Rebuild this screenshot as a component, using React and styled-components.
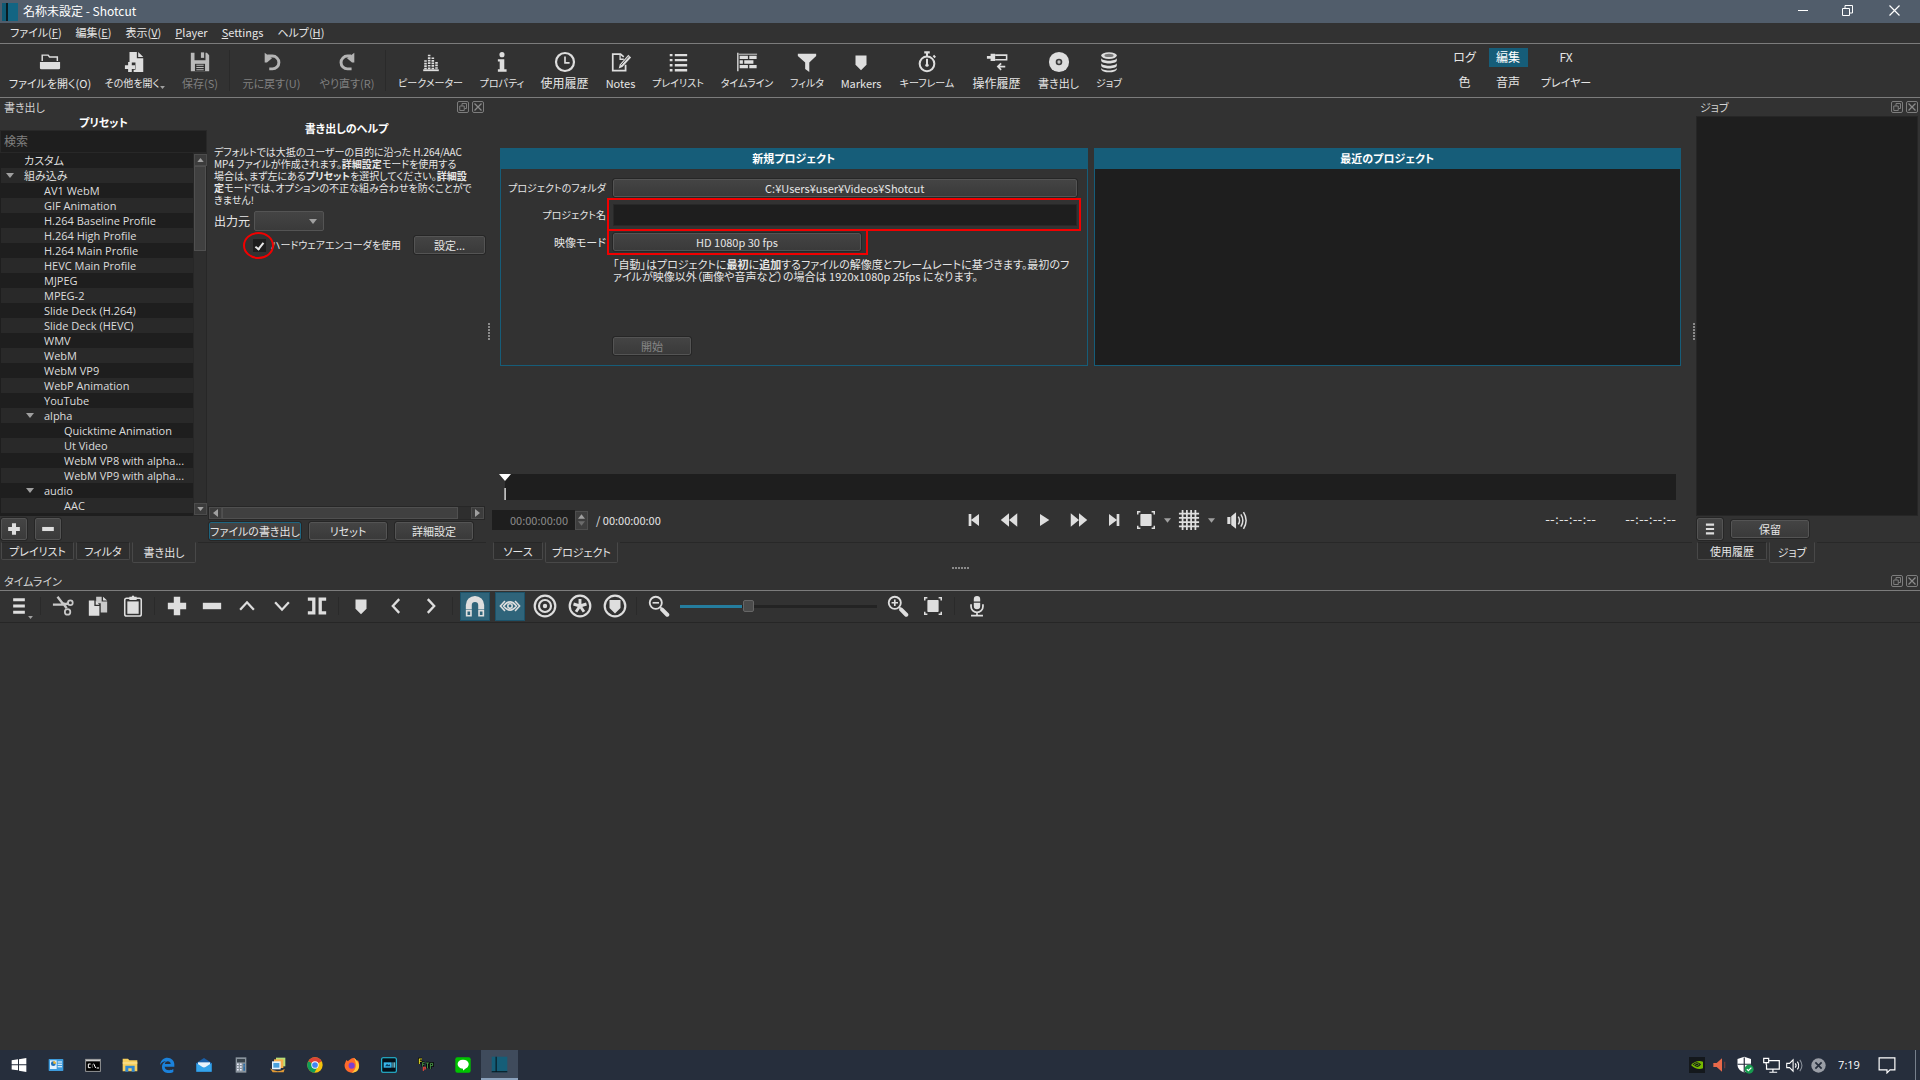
import React from "react";
import styled, { createGlobalStyle, css } from "styled-components";

const c = {
  bg: "#323232",
  dark: "#1e1e1e",
  alt: "#292929",
  line: "#7c7c7c",
  text: "#e6e6e6",
  dim: "#808080",
  accent: "#165d79",
  icon: "#dedede",
  red: "#f20000",
};

const Global = createGlobalStyle`
  *, *::before, *::after { box-sizing: border-box; }
  html, body { margin: 0; background: ${c.bg}; }
  body, button, input, select {
    font-family: "Noto Sans CJK JP", "Noto Sans", sans-serif;
    font-size: 12px;
    line-height: 12px;
    font-feature-settings: "palt";
    color: ${c.text};
  }
  button, input, select { margin: 0; padding: 0; border: 0; background: none; border-radius: 0; outline: none; }
  svg { display: block; flex: none; }
`;

const Screen = styled.div`
  min-height: 100vh;
  display: flex;
  flex-direction: column;
  overflow: hidden;
`;

/* ---------- icons ---------- */
const Svg = ({ s = 24, w, h, children, ...rest }) => (
  <svg width={w || s} height={h || s} viewBox="0 0 24 24" fill="none" stroke="none" aria-hidden="true" {...rest}>
    {children}
  </svg>
);
const I = c.icon;
const shapes = {
  open: (
    <>
      <path d="M3.500 11V4.500h6.500l1.500 2H20V11" stroke={I} strokeWidth="1.600" />
      <path d="M1 12h22v6.500q0 1.500-1.500 1.500h-19Q1 20 1 18.500z" fill={I} />
    </>
  ),
  openOther: (
    <>
      <path d="M6 1h8v7h7v15H10.500v-2.500h2V12.500H6z" fill={I} />
      <path d="M15.500 1v5.500H21z" fill={I} />
      <path d="M4.500 12h4v3.500H12v4H8.500V23h-4v-3.500H1v-4h3.500z" fill={I} />
    </>
  ),
  save: (
    <>
      <path d="M2 2h4v8h12V2h1.500L22 4.500V22H2z" fill="#b9b9b9" />
      <path d="M13 1.500h3.500v6H13z" fill="#b9b9b9" />
      <path d="M6.500 14h11v8h-11z" fill="#323232" />
      <path d="M8 15.500h8M8 18h8M8 20.500h8" stroke="#b9b9b9" strokeWidth="1.200" />
    </>
  ),
  undo: (
    <>
      <path d="M7 5.500h5.500a7 7 0 0 1 0 14H9" stroke="#b4b4b4" strokeWidth="3.200" />
      <path d="M4 2v10.500h2.500L12 8z" fill="#b4b4b4" />
    </>
  ),
  redo: (
    <>
      <path d="M16.500 5.500h-4a7 7 0 0 0 0 14h4.500" stroke="#b4b4b4" strokeWidth="3.200" />
      <path d="M20 2v10.500h-2.500L12 8z" fill="#b4b4b4" />
    </>
  ),
  peak: (
    <>
      <path d="M6 10v10M10 4v16M14 7v13M18 12v8" stroke={I} strokeWidth="2.800" strokeDasharray="1.800 1" />
      <path d="M3.500 20h17v2h-17z" fill={I} />
    </>
  ),
  info: (
    <>
      <circle cx="12" cy="4" r="2.800" fill={I} />
      <path d="M7.500 9h7v11H17v2.500H7.500V20h2v-8.500h-2z" fill={I} />
    </>
  ),
  clock: (
    <>
      <circle cx="12" cy="12" r="9.800" stroke={I} strokeWidth="2.400" />
      <path d="M12 6v7h5" stroke={I} strokeWidth="1.800" />
    </>
  ),
  notes: (
    <>
      <path d="M17 15v6.500H3v-18h8.500l3.500 3" stroke={I} strokeWidth="1.900" />
      <path d="M11 4v5h4" stroke={I} strokeWidth="1.400" />
      <path d="M20 4l3 3-9.500 10.500-4 1.500 1.200-4.300z" fill={I} />
      <path d="M12 15.500L20.500 6" stroke="#323232" strokeWidth=".9" />
    </>
  ),
  list: (
    <path d="M3 4.500h3M3 10h3M3 15.500h3M3 21h3M8.500 4.500H22M8.500 10H22M8.500 15.500H22M8.500 21H22" stroke={I} strokeWidth="2.600" />
  ),
  timeline: (
    <>
      <path d="M2 2v20" stroke={I} strokeWidth="1.500" />
      <path d="M4 7h9M14.500 7h8M4 12h3.500M9 12h10M4 17h9M14.500 17h8" stroke={I} strokeWidth="3.600" />
      <path d="M3 3.500h20" stroke={I} strokeWidth="1" />
    </>
  ),
  filter: <path d="M2 3h20v2.500l-7.500 7V23L10 19.500v-7L2 5.500z" fill={I} />,
  marker: <path d="M6 5h12v10l-6 6-6-6z" fill={I} />,
  keyframe: (
    <>
      <circle cx="12" cy="14" r="8" stroke={I} strokeWidth="2.200" />
      <path d="M9 1.500h6M12 1.500v4M19 5l2 2" stroke={I} strokeWidth="2.200" />
      <path d="M12 8.500v6" stroke={I} strokeWidth="2.200" />
      <circle cx="12" cy="15.500" r="1.800" fill={I} />
    </>
  ),
  history: (
    <>
      <path d="M1 5.500h4V3h5v8H5V8.500H1z" fill={I} />
      <path d="M10 4.500h12.500v5H10" stroke={I} strokeWidth="1.700" />
      <path d="M21 17h-8M16.500 13.500L13 17l3.500 3.500" stroke={I} strokeWidth="1.900" />
    </>
  ),
  disc: (
    <>
      <circle cx="12" cy="12" r="11" fill={I} />
      <circle cx="12" cy="12" r="3.600" fill="#3c3c3c" />
      <circle cx="12" cy="12" r="1.800" fill="#c4c4c4" />
    </>
  ),
  jobs: (
    <>
      <ellipse cx="12" cy="5" rx="8.500" ry="3.600" fill={I} />
      <ellipse cx="12" cy="4.800" rx="5" ry="1.800" fill="#777" />
      <path d="M3.500 7.500c1 4 16 4 17 0v3c-1 4-16 4-17 0zM3.500 13c1 4 16 4 17 0v3c-1 4-16 4-17 0zM3.500 18.300c1 4 16 4 17 0v1.500c-1 4.500-16 4.500-17 0z" fill={I} />
    </>
  ),
  plus: <path d="M8.500 2h7v6.500H22v7h-6.500V22h-7v-6.500H2v-7h6.500z" fill={I} />,
  minus: <path d="M2 8.500h20v7H2z" fill={I} />,
  menu: <path d="M5 4.500h14M5 12h14M5 19.500h14" stroke={I} strokeWidth="3.800" />,
  skipPrev: <path d="M4 3h4v8.500L19.500 3v18L8 12.500V21H4z" fill={I} />,
  skipNext: <path d="M20 3h-4v8.500L4.500 3v18L16 12.500V21h4z" fill={I} />,
  rewind: <path d="M12 3v18L1 12zM23 3v18l-11-9z" fill={I} />,
  forward: <path d="M12 3v18l11-9zM1 3v18l11-9z" fill={I} />,
  play: <path d="M6 3l14 9-14 9z" fill={I} />,
  fit: (
    <>
      <rect x="4.500" y="4" width="15" height="16" rx="1" fill={I} />
      <path d="M1 4.500V1h3.500M19.500 1H23v3.500M23 19.500V23h-3.500M4.500 23H1v-3.500" stroke={I} strokeWidth="2" />
    </>
  ),
  grid: <path d="M5 1v22M9.700 1v22M14.300 1v22M19 1v22M1 5h22M1 9.700h22M1 14.300h22M1 19h22" stroke={I} strokeWidth="1.900" />,
  volume: (
    <>
      <path d="M1.500 8H5v8H1.500zM6 7l5.500-4.500v19L6 17z" fill={I} />
      <path d="M14 7.500q3 4.500 0 9M17 5q4.500 7 0 14M20 2.500q6 9.500 0 19" stroke={I} strokeWidth="1.700" />
    </>
  ),
  cut: (
    <>
      <path d="M1 10.500h12l3 4M6 2l5.500 7 3 1 4-1" stroke="#c9c9c9" strokeWidth="2.600" />
      <circle cx="20" cy="8.500" r="2.600" stroke="#c9c9c9" strokeWidth="1.900" />
      <circle cx="17" cy="18.500" r="3" stroke="#c9c9c9" strokeWidth="1.900" />
    </>
  ),
  copy: (
    <>
      <path d="M10 2h6v5h6v12h-7V9h-5z" fill="#c9c9c9" />
      <path d="M2 6h6v6h5.500v10.500H2z" fill={I} />
      <path d="M17.500 2L22 6h-4.500zM9.500 6l4 4.500h-4z" fill={I} />
    </>
  ),
  paste: (
    <>
      <rect x="3" y="3.500" width="18" height="19.500" rx="2" stroke={I} strokeWidth="1.700" />
      <path d="M5.800 7h12.400v13.500H5.800z" fill={I} />
      <path d="M8 2h2.500q1.500-3 3 0H16v3.500H8z" fill={I} />
    </>
  ),
  up: <path d="M4.500 16L12 8l7.500 8" stroke={I} strokeWidth="2.500" />,
  down: <path d="M4.500 8L12 16l7.500-8" stroke={I} strokeWidth="2.500" />,
  left: <path d="M15.500 4.500L8.500 12l7 7.500" stroke={I} strokeWidth="2.500" />,
  right: <path d="M8.500 4.500l7 7.500-7 7.500" stroke={I} strokeWidth="2.500" />,
  split: <path d="M2 4.500h6.500v15H2M22 4.500h-6.500v15H22" stroke={I} strokeWidth="3.600" />,
  magnet: (
    <>
      <path d="M2 15.500V11a10 10 0 0 1 20 0v4.500h-6.500V11a3.500 3.500 0 0 0-7 0v4.500z" fill={I} />
      <path d="M2.900 17h4.700v5.600H2.900zM16.400 17h4.700v5.600h-4.700z" stroke={I} strokeWidth="1.800" />
    </>
  ),
  eye: (
    <>
      <path d="M6.500 6.500L1.500 12l5 5.500M17.500 6.500l5 5.500-5 5.500" stroke={I} strokeWidth="1.700" />
      <path d="M5 12q7-9 14 0-7 9-14 0z" stroke={I} strokeWidth="1.800" />
      <circle cx="12" cy="12" r="2.400" stroke={I} strokeWidth="1.700" />
    </>
  ),
  ripple: (
    <>
      <circle cx="12" cy="12" r="10.300" stroke={I} strokeWidth="2.200" />
      <circle cx="12" cy="12" r="6" stroke={I} strokeWidth="2.200" />
      <circle cx="12" cy="12" r="2.200" fill={I} />
    </>
  ),
  rippleAll: (
    <>
      <circle cx="12" cy="12" r="10.300" stroke={I} strokeWidth="2.200" />
      <path d="M12 5v7M12 12l6.500-2M12 12l4 5.800M12 12l-4 5.800M12 12L5.500 10" stroke={I} strokeWidth="2.900" />
    </>
  ),
  rippleMarker: (
    <>
      <circle cx="12" cy="12" r="10.300" stroke={I} strokeWidth="2.200" />
      <path d="M6.500 6h11v8L12 19.500 6.500 14z" fill={I} />
    </>
  ),
  zoomOut: (
    <>
      <circle cx="8.500" cy="8.500" r="6.600" stroke={I} strokeWidth="2" />
      <path d="M5 8.500h7" stroke={I} strokeWidth="1.800" />
      <path d="M15.500 16l5.500 5.500" stroke={I} strokeWidth="4.400" strokeLinecap="round" />
      <path d="M13 13l3 3" stroke={I} strokeWidth="1.800" />
    </>
  ),
  zoomIn: (
    <>
      <circle cx="8.500" cy="8.500" r="6.600" stroke={I} strokeWidth="2" />
      <path d="M5 8.500h7M8.500 5v7" stroke={I} strokeWidth="1.800" />
      <path d="M15.500 16l5.500 5.500" stroke={I} strokeWidth="4.400" strokeLinecap="round" />
      <path d="M13 13l3 3" stroke={I} strokeWidth="1.800" />
    </>
  ),
  mic: (
    <>
      <path d="M8.500 4.500a3.500 3.500 0 0 1 7 0v2.500h-7zM8.500 8.500h7V12a3.500 3.500 0 0 1-7 0z" fill={I} />
      <path d="M5.500 10v2.500a6.500 6.500 0 0 0 13 0V10M12 19v3M5.500 22.500h13" stroke={I} strokeWidth="1.900" />
    </>
  ),
};
const Icon = ({ name, s = 22 }) => <Svg s={s}>{shapes[name]}</Svg>;
const Caret = ({ up, fill = "#a0a0a0", w = 8, h = 5 }) => (
  <svg width={w} height={h} viewBox="0 0 8 5" aria-hidden="true">
    <path d={up ? "M0 5L4 0l4 5z" : "M0 0h8L4 5z"} fill={fill} />
  </svg>
);

/* ---------- title and menu ---------- */
const TitleBar = styled.header`
  height: 23px;
  display: flex;
  align-items: center;
  background: #515d6b;
  color: #fff;
  padding: 0 20px 3px 2px;
`;
const AppLogo = styled.span`
  width: 16px;
  height: 18px;
  margin-top: 3px;
  background: linear-gradient(90deg, #0f5a74 4px, #0a1c22 4px, #0a1c22 6px, #136583 6px);
`;
const WindowTitle = styled.span`
  flex: 1;
  padding: 2px 0 0 5px;
  font-size: 12px;
`;
const WindowButton = styled.button`
  width: 45px;
  height: 20px;
  display: flex;
  align-items: center;
  justify-content: center;
  &:last-child { width: 30px; justify-content: flex-end; }
`;
const MenuBar = styled.nav`
  height: 21px;
  display: flex;
  align-items: center;
  gap: 14px;
  padding: 0 0 2px 10px;
  border-bottom: 1px solid ${c.line};
`;
const MenuButton = styled.button`
  white-space: nowrap;
  font-size: 11px;
`;

/* ---------- main toolbar ---------- */
const Toolbar = styled.div`
  height: 54px;
  display: flex;
  padding-left: 2px;
  border-bottom: 1px solid ${c.line};
`;
const ToolButton = styled.button`
  width: ${(p) => p.$w}px;
  display: flex;
  flex-direction: column;
  align-items: center;
  gap: 4px;
  padding-top: 7px;
  flex: none;
  white-space: nowrap;
  font-size: ${(p) => p.$size || 11}px;
  color: ${(p) => (p.disabled ? c.dim : c.text)};
`;
const ToolLabel = styled.span`
  display: flex;
  align-items: flex-end;
  gap: 1px;
`;
const Separator = styled.span`
  width: ${(p) => p.$w || 4}px;
  align-self: stretch;
  margin: 6px 0;
  background: linear-gradient(90deg, transparent 1px, #2a2a2a 1px, #2a2a2a 2px, transparent 2px);
`;
const ModeGrid = styled.div`
  margin: 4px 318px 0 auto;
  display: grid;
  grid-template-columns: 43px 44px 72px;
  grid-template-rows: 19px 19px;
  row-gap: 6px;
  justify-items: center;
  align-content: start;
`;
const ModeButton = styled.button`
  min-width: 39px;
  height: 19px;
  padding-bottom: 1px;
  font-size: ${(p) => p.$size || 12}px;
  white-space: nowrap;
  background: ${(p) => (p.$on ? c.accent : "none")};
  color: ${(p) => (p.$on ? "#fff" : c.text)};
`;

/* ---------- dock frame ---------- */
const Docks = styled.main`
  display: grid;
  grid-template-columns: 486px 6px minmax(0, 1fr) 4px 224px;
`;
const Dock = styled.section`
  display: flex;
  flex-direction: column;
  min-width: 0;
`;
const DockTitle = styled.div`
  height: 18px;
  display: flex;
  align-items: center;
  gap: 3px;
  padding: 0 ${(p) => p.$right || 2}px 0 4px;
  font-size: 11px;
  color: #d4d4d4;
`;
const DockName = styled.h2`
  flex: 1;
  margin: 0;
  font-size: 11px;
  font-weight: 400;
`;
const TinyButton = styled.button`
  width: 12px;
  height: 12px;
`;
const Splitter = styled.div`
  display: flex;
  align-items: center;
  justify-content: center;
  &::after {
    content: "";
    width: ${(p) => (p.$flat ? 17 : 2)}px;
    height: ${(p) => (p.$flat ? 2 : 17)}px;
    background: repeating-linear-gradient(${(p) => (p.$flat ? "90deg" : "180deg")}, #8a8a8a 0 2px, transparent 2px 3px);
  }
`;
const FlatSplitter = styled(Splitter)`
  height: 8px;
`;

const PushButton = styled.button`
  height: 18px;
  width: ${(p) => (p.$w ? p.$w + "px" : "100%")};
  display: flex;
  align-items: center;
  justify-content: center;
  padding-bottom: 1px;
  white-space: nowrap;
  font-size: 11px;
  background: linear-gradient(#444, #3a3a3a);
  border: 1px solid ${(p) => (p.$focus ? "#1d6580" : "#545454")};
  outline: 1px solid #262626;
  border-radius: 2px;
  color: ${(p) => (p.disabled ? "#868686" : c.text)};
`;
const SquareButton = styled(PushButton)`
  width: 26px;
  height: 22px;
  padding: 0;
`;
const TabBar = styled.div`
  height: 22px;
  display: flex;
  align-items: flex-start;
  padding-left: 1px;
`;
const Tab = styled.button`
  width: ${(p) => p.$w}px;
  height: ${(p) => (p.$on ? 21 : 18)}px;
  margin-right: 2px;
  padding-bottom: 1px;
  font-size: 11px;
  white-space: nowrap;
  border: 1px solid #484848;
  border-top-color: ${(p) => (p.$on ? "transparent" : "#272727")};
  background: ${(p) => (p.$on ? c.bg : "#2e2e2e")};
  border-radius: 0 0 2px 2px;
`;
const TabRest = styled.span`
  flex: 1;
  height: 1px;
  background: #282828;
`;

/* ---------- export dock ---------- */
const ExportBody = styled.div`
  display: grid;
  grid-template-columns: 207px minmax(0, 1fr);
  height: 426px;
`;
const PresetPane = styled.div`
  display: flex;
  flex-direction: column;
`;
const PaneHeading = styled.h3`
  margin: 0;
  height: 14px;
  line-height: 12px;
  font-size: 11px;
  font-weight: 700;
  color: #fff;
  text-align: center;
`;
const Search = styled.input`
  height: 23px;
  flex: none;
  width: 100%;
  padding: 0 0 2px 3px;
  background: ${c.dark};
  border: 1px solid #282828;
  &::placeholder { color: #808080; opacity: 1; }
`;
const TreeWrap = styled.div`
  display: grid;
  grid-template-columns: minmax(0, 1fr) 14px;
  height: 363px;
  background: ${c.dark};
`;
const Tree = styled.ul`
  list-style: none;
  margin: 0;
  padding: 0 0 0 1px;
`;
const TreeRow = styled.li`
  height: 15px;
  line-height: 15px;
  display: flex;
  align-items: center;
  padding-left: ${(p) => p.$depth * 20 + 5}px;
  font-family: "Open Sans", "Noto Sans CJK JP", sans-serif;
  font-size: 11px;
  white-space: nowrap;
  color: #dcdcdc;
  background: ${c.dark};
  &:nth-child(even) { background: ${c.alt}; }
`;
const Twisty = styled.span`
  width: 18px;
  flex: none;
`;
const ScrollTrack = styled.div`
  display: flex;
  flex-direction: ${(p) => (p.$flat ? "row" : "column")};
  background: #2e2e2e;
  border: 1px solid #272727;
`;
const ScrollButton = styled.button`
  width: 13px;
  height: 12px;
  display: flex;
  flex: none;
  align-items: center;
  justify-content: center;
  background: #3c3c3c;
  border: 1px solid #4c4c4c;
`;
const ScrollThumb = styled.span`
  flex: ${(p) => p.$grow};
  background: #404040;
  border: 1px solid #505050;
`;
const ScrollRest = styled.span`
  flex: ${(p) => p.$grow};
`;
const PresetActions = styled.div`
  display: flex;
  gap: 8px;
  padding: 2px 0 0 1px;
`;
const ExportPane = styled.div`
  display: flex;
  flex-direction: column;
  padding: 6px 1px 2px 1px;
  min-width: 0;
`;
const HelpText = styled.p`
  margin: 10px 0 5px 6px;
  font-size: 10px;
  line-height: 12px;
  white-space: nowrap;
`;
const FieldRow = styled.div`
  display: flex;
  align-items: center;
  padding-left: 6px;
  margin-bottom: 5px;
  font-size: 12px;
`;
const SourceLabel = styled.label`
  width: 40px;
  white-space: nowrap;
`;
const SelectBox = styled.span`
  display: flex;
  align-items: center;
  width: 70px;
  height: 20px;
  padding-right: 6px;
  background: linear-gradient(#444, #3a3a3a);
  border: 1px solid #545454;
  border-radius: 2px;
`;
const Select = styled.select`
  appearance: none;
  flex: 1;
  height: 16px;
`;
const CheckWrap = styled.span`
  position: relative;
  display: flex;
  margin-left: 39px;
  margin-right: 5px;
`;
const Checkbox = styled.input`
  appearance: none;
  width: 13px;
  height: 13px;
  background: ${c.dark};
  display: grid;
  place-items: center;
  &:checked::after {
    content: "";
    width: 5px;
    height: 9px;
    border: solid #e8e8e8;
    border-width: 0 2px 2px 0;
    transform: rotate(38deg);
  }
`;
const RedRing = styled.span`
  position: absolute;
  left: -10px;
  top: -7px;
  width: 31px;
  height: 27px;
  border: 2px solid ${c.red};
  border-radius: 50%;
  pointer-events: none;
`;
const HardwareLabel = styled.label`
  flex: 1;
  white-space: nowrap;
  font-size: 10px;
`;
const ExportActions = styled.div`
  display: flex;
  gap: 8px;
  padding: 2px 0 0 1px;
`;

/* ---------- centre ---------- */
const StartScreen = styled.div`
  display: grid;
  grid-template-columns: 1fr 1fr;
  gap: 6px;
  padding: 50px 11px 0 8px;
`;
const Card = styled.section`
  height: 218px;
  border: 1px solid ${c.accent};
  background: ${(p) => (p.$dark ? c.dark : c.bg)};
`;
const CardTitle = styled.h2`
  margin: 0;
  height: 20px;
  line-height: 18px;
  background: ${c.accent};
  text-align: center;
  font-size: 11px;
  font-weight: 700;
  color: #fff;
`;
const Form = styled.form`
  display: grid;
  grid-template-columns: 105px minmax(0, 1fr);
  grid-template-rows: 18px 22px 18px 72px 18px;
  gap: 7px;
  padding: 10px 10px 0 0;
  align-items: center;
`;
const FormLabel = styled.label`
  text-align: right;
  font-size: ${(p) => p.$size || 10}px;
  white-space: nowrap;
`;
const FormCell = styled.div`
  position: relative;
  display: flex;
  align-items: center;
  grid-column: 2;
  &::after {
    content: "";
    display: ${(p) => (p.$marked ? "block" : "none")};
    position: absolute;
    inset: ${(p) => p.$marked};
    border: 2px solid ${c.red};
    pointer-events: none;
  }
`;
const ModeCell = styled.div`
  position: relative;
  &::after {
    content: "";
    position: absolute;
    inset: -4px -7px -4px -6px;
    border: 2px solid ${c.red};
    pointer-events: none;
  }
`;
const NameInput = styled.input`
  width: 100%;
  height: 22px;
  background: ${c.dark};
  border: 1px solid #282828;
`;
const ModeHint = styled.p`
  grid-column: 2;
  align-self: start;
  margin: 0;
  font-size: 11px;
  line-height: 12px;
`;
const Scrubber = styled.div`
  position: relative;
  height: 26px;
  margin: 108px 16px 0 13px;
  background: ${c.dark};
`;
const Playhead = styled.svg`
  position: absolute;
  left: -6px;
  top: 0;
`;
const Controls = styled.div`
  height: 42px;
  display: flex;
  align-items: center;
  justify-content: space-between;
  padding: 0 16px 2px 0;
`;
const TimeGroup = styled.div`
  display: flex;
  align-items: center;
`;
const TimeInput = styled.input`
  width: 83px;
  height: 20px;
  padding-right: 7px;
  text-align: right;
  font-size: 11px;
  background: ${c.dark};
  color: #8c8c8c;
`;
const Spin = styled.button`
  width: 13px;
  height: 19px;
  display: flex;
  flex-direction: column;
  align-items: center;
  justify-content: space-evenly;
  background: #3e3e3e;
  border: 1px solid #4e4e4e;
`;
const Duration = styled.span`
  padding-left: 8px;
  font-size: 11px;
  white-space: nowrap;
`;
const Transport = styled.div`
  display: flex;
  align-items: center;
  padding-left: 9px;
`;
const TransportButton = styled.button`
  width: ${(p) => p.$w || 35}px;
  height: 24px;
  display: flex;
  align-items: center;
  justify-content: center;
`;
const Points = styled.div`
  display: flex;
  gap: 26px;
`;
const Point = styled.span`
  width: 54px;
  text-align: right;
  white-space: nowrap;
  font-family: "DejaVu Sans", sans-serif;
  font-size: 13px;
`;

/* ---------- jobs ---------- */
const JobList = styled.div`
  height: 400px;
  margin-right: 2px;
  background: ${c.dark};
  border: 1px solid #262626;
`;
const JobActions = styled.div`
  height: 26px;
  display: flex;
  align-items: center;
  gap: 8px;
  padding-left: 1px;
`;

/* ---------- timeline ---------- */
const TimelineBar = styled.div`
  height: 33px;
  display: flex;
  align-items: center;
  gap: 5px;
  padding: 0 0 1px 4px;
  border-top: 1px solid ${c.line};
  border-bottom: 1px solid #262626;
`;
const IconButton = styled.button`
  position: relative;
  width: 30px;
  height: 29px;
  display: flex;
  align-items: center;
  justify-content: center;
  flex: none;
  ${(p) =>
    p.$on &&
    css`
      background: #2f647a;
      border: 1px solid #1c5269;
    `}
`;
const CornerCaret = styled.span`
  position: absolute;
  right: 1px;
  bottom: 2px;
`;
const ZoomSlider = styled.input`
  appearance: none;
  width: 197px;
  height: 14px;
  margin: 0 1px;
  background: linear-gradient(90deg, #257d9e 62px, #232323 62px) center / 100% 3px no-repeat;
  &::-webkit-slider-thumb {
    appearance: none;
    width: 11px;
    height: 12px;
    background: #4b4b4b;
    border: 1px solid #666;
    border-radius: 2px;
  }
`;
const TimelineArea = styled.div`
  flex: 1;
`;

/* ---------- task bar ---------- */
const TaskBar = styled.footer`
  height: 30px;
  display: flex;
  background: #262e3c;
  color: #fff;
`;
const TaskButton = styled.button`
  width: 37px;
  display: flex;
  align-items: center;
  justify-content: center;
  ${(p) =>
    p.$on &&
    css`
      background: #3f4b5c;
      border-bottom: 2px solid #8ba2bc;
    `}
`;
const Tray = styled.div`
  margin-left: auto;
  display: flex;
  align-items: center;
`;
const TrayButton = styled.button`
  width: ${(p) => p.$w || 24}px;
  height: 30px;
  display: flex;
  align-items: center;
  justify-content: center;
`;
const Clock = styled.time`
  width: 38px;
  text-align: center;
  font-family: "Open Sans", sans-serif;
  font-size: 11px;
`;
const DesktopEdge = styled.span`
  width: 1px;
  height: 30px;
  margin: 0 4px 0 9px;
  background: #77808c;
`;

/* ---------- data ---------- */
const menus = [["ファイル(", "F", ")"], ["編集(", "E", ")"], ["表示(", "V", ")"], ["", "P", "layer"], ["", "S", "ettings"], ["ヘルプ(", "H", ")"]];
const tools = [
  ["open", "ファイルを開く(O)", 96],
  ["openOther", "その他を開く", 74, { caret: true, size: 10 }],
  ["save", "保存(S)", 56, { off: true }],
  null,
  ["undo", "元に戻す(U)", 77, { off: true }],
  ["redo", "やり直す(R)", 74, { off: true }],
  null,
  ["peak", "ピークメーター", 83, { size: 10 }],
  ["info", "プロパティ", 60, { size: 10 }],
  ["clock", "使用履歴", 65, { size: 12 }],
  ["notes", "Notes", 47],
  ["list", "プレイリスト", 68, { size: 10 }],
  ["timeline", "タイムライン", 70, { size: 10 }],
  ["filter", "フィルタ", 50, { size: 10 }],
  ["marker", "Markers", 58],
  ["keyframe", "キーフレーム", 74, { size: 10 }],
  ["history", "操作履歴", 65, { size: 12 }],
  ["disc", "書き出し", 59],
  ["jobs", "ジョブ", 42, { size: 10 }],
];
const presets = [
  [0, "カスタム"], [0, "組み込み", true], [1, "AV1 WebM"], [1, "GIF Animation"], [1, "H.264 Baseline Profile"],
  [1, "H.264 High Profile"], [1, "H.264 Main Profile"], [1, "HEVC Main Profile"], [1, "MJPEG"], [1, "MPEG-2"],
  [1, "Slide Deck (H.264)"], [1, "Slide Deck (HEVC)"], [1, "WMV"], [1, "WebM"], [1, "WebM VP9"],
  [1, "WebP Animation"], [1, "YouTube"], [1, "alpha", true], [2, "Quicktime Animation"], [2, "Ut Video"],
  [2, "WebM VP8 with alpha..."], [2, "WebM VP9 with alpha..."], [1, "audio", true], [2, "AAC"],
];

const taskIcons = [
  ["スタート", <path key="a" d="M1 5l9.500-1.500V11H1zM12 3.300L23 1.500V11H12zM1 12.500h9.500V20L1 18.800zM12 12.500h11V22.500l-11-2z" fill="#fff" />],
  ["コントロール パネル", <g key="a"><rect x="1" y="3" width="22" height="18" rx="1" fill="#3d9bdc" /><path d="M3 5h10v13H3z" fill="#dff1ff" /><circle cx="8" cy="10" r="3.600" fill="#1d6fb8" /><path d="M8 10V6A4 4 0 0 1 12 10z" fill="#f5b82e" /><path d="M14.500 7.500H21M14.500 11H21M14.500 14.500H21" stroke="#fff" strokeWidth="1.600" /></g>],
  ["コマンド プロンプト", <g key="a"><rect x="1" y="3.500" width="22" height="18" fill="#000" stroke="#aaa" strokeWidth="1.300" /><path d="M1.500 4h21v2.500h-21z" fill="#ccc" /><path d="M8.500 10.500H5v5.500h3.500M11 11.500v1M11 14.500v1M13 10l3 6.500M17.500 16.500H21" stroke="#fff" strokeWidth="1.500" /></g>],
  ["エクスプローラー", <g key="a"><path d="M1 2.500h8L11 5h12v16.500H1z" fill="#f7cf5e" /><path d="M1 8h22v2H1z" fill="#fbe294" /><path d="M5 13h14v9h-4.500v-5h-5v5H5z" fill="#2f86cf" /></g>],
  ["Edge", <path key="a" d="M1.500 12C2.500 4.500 7.500 1 12.500 1 18.500 1 23 5.500 23 11v3.500H8.500c0 6 8.500 6.500 13 3.500v4.500C15 26 4.500 24 4.500 15 4.500 10 8 7.500 11 6.500 7 6 3.500 8.500 1.500 12zm7.200-1.500H17.500c0-5.500-8-5.500-8.800 0z" fill="#1b82dc" />],
  ["メール", <g key="a"><path d="M.5 9L12 1.500 23.500 9v13H.5z" fill="#1a5fa8" /><path d="M3 8h18v8H3z" fill="#e9f4fc" /><path d="M.5 9L12 16.500 23.500 9v13H.5z" fill="#35a4ea" /></g>],
  ["電卓", <g key="a"><path d="M4 .5h16v23H4z" fill="#8a949d" /><path d="M6 3h12v5H6z" fill="#39434c" /><path d="M6 11h2.500M10.500 11H13M6 15h2.500M10.500 15H13M6 19h2.500M10.500 19H13" stroke="#eef" strokeWidth="2.300" /><path d="M15.500 10h2.500v3h-2.500zM15.500 14h2.500v6.500h-2.500z" fill="#2b6ca8" /></g>],
  ["フォト ビューア", <g key="a"><path d="M9 1h14v13H9z" fill="#b8df77" /><path d="M6 3.500h14v13H6z" fill="#f6ad4a" /><path d="M3 6.500h13v12H3z" fill="#e7f3fb" /><path d="M5 9h9v7H5z" fill="#4aa0db" /><path d="M0 17q10 8 22 1l-1.500 5H4z" fill="#e29a35" /></g>],
  ["Chrome", <g key="a"><circle cx="12" cy="12" r="11.500" fill="#f4c20d" /><path d="M12 12L2 6.200A11.500 11.500 0 0 1 22 6.500z" fill="#db4437" /><path d="M12 12L2 6.200A11.500 11.500 0 0 0 11 23.500l5-9z" fill="#0f9d58" /><circle cx="12" cy="12" r="5.500" fill="#fff" /><circle cx="12" cy="12" r="4.300" fill="#4285f4" /></g>],
  ["Firefox", <g key="a"><path d="M12 2q3-1 3-1 3 2 4 5l2-1c4 8 1 18-9 18.500C5 23.500 0 18 1 11l2.500-6.500 2.500 2c2-2 3-3 6-4.500z" fill="#ff6a2b" /><path d="M15 1.500c6 5 10 11 6 18-2 3-6 4-9.500 4 6.500-4 8.500-12 3.500-22z" fill="#ffc83a" /><circle cx="11.500" cy="13" r="4.600" fill="#7b3fd1" /></g>],
  ["キャプチャ", <g key="a"><rect x="1" y="1" width="22" height="22" rx="2" fill="#041019" stroke="#27c9e8" strokeWidth="1.600" /><path d="M4 8h12v8H4z" fill="#38b7ea" /><path d="M6 14l3-4 2 2 2-1 1 3z" fill="#0b3d63" /><path d="M18 8v8M20.500 8v8" stroke="#8be4f6" strokeWidth="1.400" /></g>],
  ["FFFTP", <g key="a"><path d="M2 10.500V3h4M2 6.500h3.500" stroke="#000" strokeWidth="3.600" /><path d="M7 14.500V8h3M7 11h2.500M12 9h4.500M14.200 9v8M18.500 18V9.500H22V13h-3.500" stroke="#000" strokeWidth="3.600" /><path d="M2 10.500V3h4M2 6.500h3.500" stroke="#e6dc2a" strokeWidth="1.600" /><path d="M7 14.500V8h3M7 11h2.500M12 9h4.500M14.200 9v8M18.500 18V9.500H22V13h-3.500" stroke="#4e9c4e" strokeWidth="1.400" /><path d="M8 21v-5.500h3V18H8" stroke="#e4453a" strokeWidth="1.600" /></g>],
  ["LINE", <g key="a"><rect x=".5" y=".5" width="23" height="23" rx="3" fill="#00c300" /><path d="M12 4c10 0 11 9.500 4.500 13-1.500 1-4.500 3.500-4.500 3.500V17.500C1 16.500 1.500 4 12 4z" fill="#fff" /></g>],
  ["Shotcut", <g key="a"><path d="M1 1h22v22H1z" fill="#155e78" /><path d="M6.500 1h1.500v22H6.500zM1 21.500h22V23H1z" fill="#061318" /></g>],
];

const FloatIcon = () => (
  <Svg s={12}><rect x="1" y="1" width="22" height="22" rx="3" stroke="#7d7d7d" strokeWidth="2" /><path d="M10 10V5h9v10h-4M5.500 10h9v9h-9z" stroke="#7d7d7d" strokeWidth="2" /></Svg>
);
const CloseIcon = () => (
  <Svg s={12}><rect x="1" y="1" width="22" height="22" rx="3" stroke="#7d7d7d" strokeWidth="2" /><path d="M5 5l14 14M19 5L5 19" stroke="#8a8a8a" strokeWidth="2.600" /></Svg>
);
const DockHeader = ({ name, right }) => (
  <DockTitle $right={right}>
    <DockName>{name}</DockName>
    <TinyButton aria-label="フロート"><FloatIcon /></TinyButton>
    <TinyButton aria-label="閉じる"><CloseIcon /></TinyButton>
  </DockTitle>
);
const Tabs = ({ items }) => (
  <TabBar>
    {items.map(([label, w, on]) => <Tab key={label} $w={w} $on={on}>{label}</Tab>)}
    <TabRest />
  </TabBar>
);
const Tool = ({ name, on, size }) => (
  <IconButton $on={on} aria-label={name}><Icon name={name} s={size} /></IconButton>
);

function ExportDock() {
  return (
    <Dock>
      <DockHeader name="書き出し" right={2} />
      <ExportBody>
        <PresetPane>
          <PaneHeading>プリセット</PaneHeading>
          <Search placeholder="検索" aria-label="検索" />
          <TreeWrap>
            <Tree>
              {presets.map(([depth, name, parent]) => (
                <TreeRow key={name} $depth={depth}>
                  <Twisty>{parent && <Caret />}</Twisty>
                  {name}
                </TreeRow>
              ))}
            </Tree>
            <ScrollTrack>
              <ScrollButton aria-label="上へ"><Caret up w={7} h={4} /></ScrollButton>
              <ScrollThumb $grow={83} />
              <ScrollRest $grow={254} />
              <ScrollButton aria-label="下へ"><Caret w={7} h={4} /></ScrollButton>
            </ScrollTrack>
          </TreeWrap>
          <PresetActions>
            <SquareButton aria-label="追加"><Icon name="plus" s={14} /></SquareButton>
            <SquareButton aria-label="削除"><Icon name="minus" s={14} /></SquareButton>
          </PresetActions>
        </PresetPane>
        <ExportPane>
          <PaneHeading>書き出しのヘルプ</PaneHeading>
          <HelpText>
            デフォルトでは大抵のユーザーの目的に沿った H.264/AAC<br />
            MP4 ファイルが作成されます。<b>詳細設定</b>モードを使用する<br />
            場合は、まず左にある<b>プリセット</b>を選択してください。<b>詳細設</b><br />
            <b>定</b>モードでは、オプションの不正な組み合わせを防ぐことがで<br />
            きません!
          </HelpText>
          <FieldRow>
            <SourceLabel htmlFor="source">出力元</SourceLabel>
            <SelectBox><Select id="source" /><Caret /></SelectBox>
          </FieldRow>
          <FieldRow>
            <CheckWrap>
              <Checkbox type="checkbox" id="hw" defaultChecked />
              <RedRing />
            </CheckWrap>
            <HardwareLabel htmlFor="hw">ハードウェアエンコーダを使用</HardwareLabel>
            <PushButton $w={71}>設定...</PushButton>
          </FieldRow>
          <ScrollRest $grow={1} />
          <ScrollTrack $flat>
            <ScrollButton aria-label="左へ"><svg width="5" height="8" viewBox="0 0 5 8"><path d="M5 0v8L0 4z" fill="#a0a0a0" /></svg></ScrollButton>
            <ScrollThumb $grow={237} />
            <ScrollRest $grow={13} />
            <ScrollButton aria-label="右へ"><svg width="5" height="8" viewBox="0 0 5 8"><path d="M0 0v8l5-4z" fill="#a0a0a0" /></svg></ScrollButton>
          </ScrollTrack>
          <ExportActions>
            <PushButton $w={92} $focus>ファイルの書き出し</PushButton>
            <PushButton $w={78}>リセット</PushButton>
            <PushButton $w={78}>詳細設定</PushButton>
          </ExportActions>
        </ExportPane>
      </ExportBody>
      <Tabs items={[["プレイリスト", 73], ["フィルタ", 54], ["書き出し", 64, true]]} />
    </Dock>
  );
}

function PlayerDock() {
  return (
    <Dock>
      <StartScreen>
        <Card>
          <CardTitle>新規プロジェクト</CardTitle>
          <Form onSubmit={(e) => e.preventDefault()}>
            <FormLabel htmlFor="folder">プロジェクトのフォルダ</FormLabel>
            <FormCell><PushButton type="button" id="folder">C:¥Users¥user¥Videos¥Shotcut</PushButton></FormCell>
            <FormLabel htmlFor="name">プロジェクト名</FormLabel>
            <FormCell $marked="-6px -4px -5px -6px"><NameInput id="name" /></FormCell>
            <FormLabel htmlFor="mode" $size={11}>映像モード</FormLabel>
            <FormCell>
              <ModeCell><PushButton type="button" id="mode" $w={248}>HD 1080p 30 fps</PushButton></ModeCell>
            </FormCell>
            <ModeHint>
              「自動」はプロジェクトに<b>最初</b>に<b>追加</b>するファイルの解像度とフレームレートに基づきます。最初のファイルが映像以外（画像や音声など）の場合は 1920x1080p 25fps になります。
            </ModeHint>
            <FormCell><PushButton disabled $w={78}>開始</PushButton></FormCell>
          </Form>
        </Card>
        <Card $dark><CardTitle>最近のプロジェクト</CardTitle></Card>
      </StartScreen>
      <Scrubber>
        <Playhead width="12" height="26" viewBox="0 0 12 26"><path d="M0 0h12L6 7zM5.500 14h1.200v12H5.500z" fill="#fff" /></Playhead>
      </Scrubber>
      <Controls>
        <TimeGroup>
          <TimeInput aria-label="位置" defaultValue="00:00:00:00" />
          <Spin aria-label="増減"><Caret up w={7} h={5} /><Caret w={7} h={5} fill="#6c6c6c" /></Spin>
          <Duration>/ 00:00:00:00</Duration>
        </TimeGroup>
        <Transport>
          {["skipPrev", "rewind", "play", "forward", "skipNext"].map((n) => (
            <TransportButton key={n} aria-label={n}><Icon name={n} s={n === "rewind" || n === "forward" ? 18 : 16} /></TransportButton>
          ))}
          <TransportButton $w={30} aria-label="ズーム"><Icon name="fit" s={18} /></TransportButton>
          <TransportButton $w={12} aria-label="ズームのメニュー"><Caret w={7} /></TransportButton>
          <TransportButton $w={32} aria-label="グリッド"><Icon name="grid" /></TransportButton>
          <TransportButton $w={12} aria-label="グリッドのメニュー"><Caret w={7} /></TransportButton>
          <TransportButton $w={38} aria-label="音量"><Icon name="volume" s={21} /></TransportButton>
        </Transport>
        <Points><Point>--:--:--:--</Point><Point>--:--:--:--</Point></Points>
      </Controls>
      <Tabs items={[["ソース", 50], ["プロジェクト", 73, true]]} />
    </Dock>
  );
}

export default function App() {
  return (
    <Screen>
      <Global />
      <TitleBar>
        <AppLogo />
        <WindowTitle>名称未設定 - Shotcut</WindowTitle>
        <WindowButton aria-label="最小化"><svg width="10" height="10"><path d="M0 5.500h10" stroke="#fff" /></svg></WindowButton>
        <WindowButton aria-label="元に戻す"><svg width="11" height="11" fill="none" stroke="#fff"><path d="M.5 3.500h7v7h-7zM3 3V.5h7.500V8H8" /></svg></WindowButton>
        <WindowButton aria-label="終了"><svg width="11" height="11" stroke="#fff" strokeWidth="1.200"><path d="M.5.5l10 10M10.500.5l-10 10" /></svg></WindowButton>
      </TitleBar>
      <MenuBar>
        {menus.map(([a, k, b]) => <MenuButton key={k}>{a}<u>{k}</u>{b}</MenuButton>)}
      </MenuBar>
      <Toolbar>
        {tools.map((t, i) => {
          if (!t) return <Separator key={i} $w={5} />;
          const [name, label, w, o = {}] = t;
          return (
            <ToolButton key={name} $w={w} $size={o.size} disabled={o.off}>
              <Icon name={name} />
              <ToolLabel>{label}{o.caret && <Caret w={5} h={3} />}</ToolLabel>
            </ToolButton>
          );
        })}
        <ModeGrid>
          <ModeButton>ログ</ModeButton>
          <ModeButton $on>編集</ModeButton>
          <ModeButton>FX</ModeButton>
          <ModeButton>色</ModeButton>
          <ModeButton>音声</ModeButton>
          <ModeButton $size={11}>プレイヤー</ModeButton>
        </ModeGrid>
      </Toolbar>
      <Docks>
        <ExportDock />
        <Splitter />
        <PlayerDock />
        <Splitter />
        <Dock>
          <DockHeader name="ジョブ" />
          <JobList />
          <JobActions>
            <SquareButton aria-label="メニュー"><Icon name="menu" s={14} /></SquareButton>
            <PushButton $w={78}>保留</PushButton>
          </JobActions>
          <Tabs items={[["使用履歴", 70], ["ジョブ", 46, true]]} />
        </Dock>
      </Docks>
      <FlatSplitter $flat />
      <DockHeader name="タイムライン" />
      <TimelineBar>
        <IconButton aria-label="メニュー"><Icon name="menu" s={20} /><CornerCaret><Caret w={5} h={3} /></CornerCaret></IconButton>
        <Separator />
        {["cut", "copy", "paste"].map((n) => <Tool key={n} name={n} />)}
        <Separator />
        {["plus", "minus", "up", "down", "split"].map((n) => <Tool key={n} name={n} />)}
        <Separator />
        {["marker", "left", "right"].map((n) => <Tool key={n} name={n} />)}
        <Separator />
        <Tool name="magnet" on />
        <Tool name="eye" on />
        {["ripple", "rippleAll", "rippleMarker"].map((n) => <Tool key={n} name={n} size={24} />)}
        <Separator />
        <Tool name="zoomOut" />
        <ZoomSlider type="range" aria-label="ズーム" min="0" max="100" defaultValue="34" />
        <Tool name="zoomIn" />
        <Tool name="fit" size={18} />
        <Separator />
        <Tool name="mic" />
      </TimelineBar>
      <TimelineArea />
      <TaskBar>
        {taskIcons.map(([label, art], i) => (
          <TaskButton key={label} aria-label={label} $on={i === 13}><Svg s={i === 13 ? 17 : 16}>{art}</Svg></TaskButton>
        ))}
        <Tray>
          <TrayButton aria-label="NVIDIA"><Svg s={16}><rect width="24" height="24" fill="#14181c" /><path d="M3 12q8-8 18-5v10q-10 3-18-5z" fill="#76b900" /><path d="M6 12q5-6 11-1-3 5-8 2 2-3 5-1.500" stroke="#14181c" strokeWidth="1.600" /></Svg></TrayButton>
          <TrayButton $w={22} aria-label="サウンド"><Svg s={16}><path d="M2 9h5l8-7v20l-8-7H2z" fill="#e8694a" /><path d="M19 7v10" stroke="#6a3a38" strokeWidth="2" /></Svg></TrayButton>
          <TrayButton $w={28} aria-label="セキュリティ"><Svg s={18}><path d="M11 1l9 3v8c0 5-5 9-9 10-4-1-9-5-9-10V4z" fill="#fff" /><path d="M11 2v20M2 11h18" stroke="#262e3c" strokeWidth="1.600" /><circle cx="17.500" cy="17.500" r="6" fill="#179b4e" /><path d="M14.500 17.500l2 2 4-4" stroke="#fff" strokeWidth="1.600" /></Svg></TrayButton>
          <TrayButton aria-label="ネットワーク"><Svg s={17}><path d="M8 5h15v12H5v-6M14 17v4M9 21.500h11M1 2h7v6H1zM4.500 8v3" stroke="#fff" strokeWidth="1.700" /></Svg></TrayButton>
          <TrayButton $w={23} aria-label="音量"><Svg s={17}><path d="M1 9h4l5-5v16l-5-5H1z" stroke="#fff" strokeWidth="1.500" /><path d="M13 9q2.500 3 0 6M16 6.500q4 5.500 0 11" stroke="#fff" strokeWidth="1.500" /><path d="M19.500 4q6 8 0 16" stroke="#8a919b" strokeWidth="1.500" /></Svg></TrayButton>
          <TrayButton aria-label="状態"><Svg s={15}><circle cx="12" cy="12" r="11.500" fill="#9a9ea6" /><path d="M7 7l10 10M17 7L7 17" stroke="#262e3c" strokeWidth="2.800" /></Svg></TrayButton>
          <Clock>7:19</Clock>
          <TrayButton $w={38} aria-label="通知"><Svg s={18}><path d="M1.500 2.500h21v16H16l-4 4v-4H1.500z" stroke="#fff" strokeWidth="1.600" /></Svg></TrayButton>
          <DesktopEdge />
        </Tray>
      </TaskBar>
    </Screen>
  );
}
